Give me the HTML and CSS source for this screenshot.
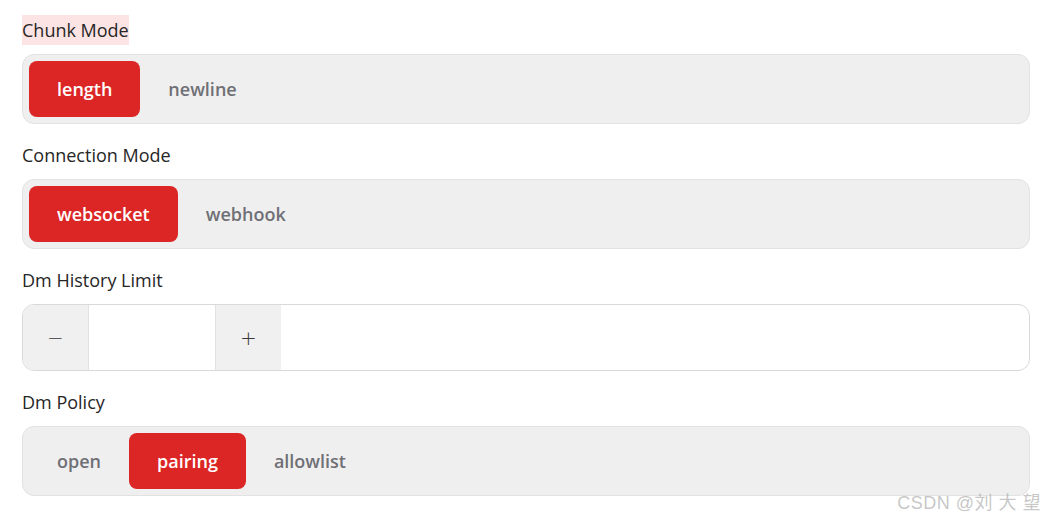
FILE: index.html
```html
<!DOCTYPE html>
<html lang="en">
<head>
<meta charset="utf-8">
<link rel="stylesheet" href="styles.css">
</head>
<body>
<div class="form">
  <div class="field">
    <div class="label"><span class="hl">Chunk Mode</span></div>
    <div class="seg">
      <button class="opt active">length</button>
      <button class="opt">newline</button>
    </div>
  </div>
  <div class="field">
    <div class="label">Connection Mode</div>
    <div class="seg">
      <button class="opt active">websocket</button>
      <button class="opt">webhook</button>
    </div>
  </div>
  <div class="field">
    <div class="label">Dm History Limit</div>
    <div class="num">
      <button class="step minus">−</button>
      <div class="num-input"></div>
      <button class="step plus">+</button>
    </div>
  </div>
  <div class="field">
    <div class="label">Dm Policy</div>
    <div class="seg">
      <button class="opt">open</button>
      <button class="opt active">pairing</button>
      <button class="opt">allowlist</button>
    </div>
  </div>
</div>
<div class="watermark">CSDN @刘 大 望</div>
</body>
</html>
```
FILE: styles.css
```css
html, body {
  margin: 0;
  background: #ffffff;
}
body {
  font-family: "Open Sans", "Noto Sans", sans-serif;
  color: #333333;
  position: relative;
  width: 1045px;
  height: 520px;
  overflow: hidden;
}
.form {
  padding: 15px 15px 0 22px;
  display: flex;
  flex-direction: column;
  gap: 16px;
}
.field {
  display: flex;
  flex-direction: column;
  gap: 9px;
}
.label {
  font-size: 18px;
  font-weight: 500;
  line-height: 30px;
  height: 30px;
  color: #262626;
}
.hl {
  background: #fde4e4;
  display: inline-block;
}
.seg {
  display: flex;
  height: 70px;
  box-sizing: border-box;
  padding: 6px;
  background: #efefef;
  border: 1px solid #e2e2e2;
  border-radius: 12px;
}
.opt {
  border: 0;
  background: transparent;
  font-family: inherit;
  font-size: 18px;
  font-weight: 600;
  color: #6f6f76;
  padding: 0 28px;
  border-radius: 8px;
  cursor: pointer;
}
.opt.active {
  background: #dc2626;
  color: #ffffff;
}
.num {
  display: flex;
  height: 67px;
  box-sizing: border-box;
  border: 1px solid #d9d9d9;
  border-radius: 12px;
  overflow: hidden;
  background: #ffffff;
}
.step {
  width: 66px;
  border: 0;
  background: #f0f0f0;
  font-family: "DejaVu Sans", sans-serif;
  font-size: 20px;
  font-weight: 300;
  color: #3a3a3a;
  padding: 0;
}
.minus {
  border-right: 1px solid #e2e2e2;
}
.plus {
  border-left: 1px solid #e2e2e2;
}
.num-input {
  width: 126px;
  background: #ffffff;
}
.watermark {
  position: absolute;
  right: 4px;
  bottom: 6px;
  font-family: "Liberation Sans", "Noto Sans CJK SC", sans-serif;
  font-size: 18px;
  color: rgba(150, 150, 150, 0.55);
  letter-spacing: 0.5px;
}
```
